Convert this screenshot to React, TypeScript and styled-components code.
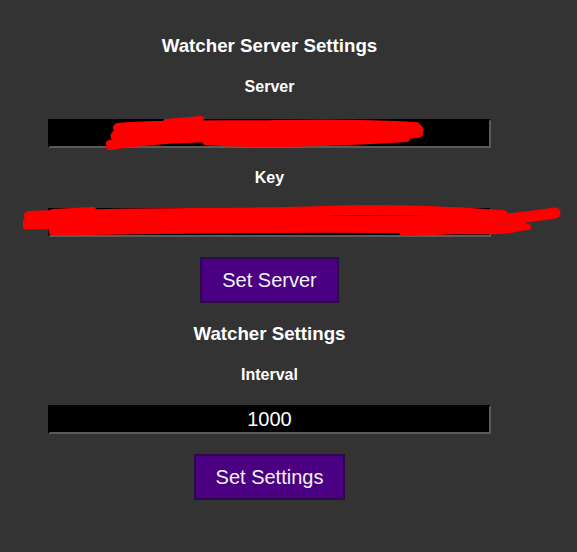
import React from 'react';
import styled, { createGlobalStyle } from 'styled-components';

const GlobalStyle = createGlobalStyle`
  html, body {
    margin: 0;
    padding: 0;
    background-color: #333333;
  }
  body {
    font-family: 'Liberation Sans', Arial, sans-serif;
    color: #ffffff;
  }
`;

const Page = styled.div`
  width: 577px;
  min-height: 552px;
  background-color: #333333;
  padding: 35px 0 0 48px;
  box-sizing: border-box;
`;

const Panel = styled.div`
  width: 443px;
  display: flex;
  flex-direction: column;
  align-items: center;
`;

const Heading = styled.h3<{ $top?: number }>`
  margin: ${(p) => p.$top ?? 0}px 0 0;
  font-size: 18.72px;
  line-height: 22px;
  font-weight: bold;
  color: #ffffff;
`;

const Label = styled.h4<{ $top: number }>`
  margin: ${(p) => p.$top}px 0 0;
  font-size: 16px;
  line-height: 18px;
  font-weight: bold;
  color: #ffffff;
`;

const Field = styled.div<{ $top: number }>`
  position: relative;
  width: 100%;
  margin-top: ${(p) => p.$top}px;
`;

const Input = styled.input`
  display: block;
  width: 100%;
  height: 29px;
  box-sizing: border-box;
  background-color: #000000;
  color: #ffffff;
  border-style: solid;
  border-width: 2px;
  border-color: #000000 #5a5a5a #5a5a5a #000000;
  font-family: 'Liberation Sans', Arial, sans-serif;
  font-size: 20px;
  text-align: center;
  padding: 0;
  outline: none;
`;

// red marker strokes that hide the server address and key
const Scribble = styled.svg`
  position: absolute;
  pointer-events: none;
`;

const Button = styled.button<{ $top: number }>`
  margin-top: ${(p) => p.$top}px;
  height: 46px;
  padding: 0 20px;
  background-color: #4b0082;
  border: 2px solid #2c0a45;
  color: #f2f2f2;
  font-family: 'Liberation Sans', Arial, sans-serif;
  font-size: 20px;
  cursor: pointer;
`;

const App: React.FC = () => {
  return (
    <>
      <GlobalStyle />
      <Page>
        <Panel>
          <Heading>Watcher Server Settings</Heading>
          <Label $top={21}>Server</Label>
          <Field $top={23}>
            <Input type="text" defaultValue="" />
            <Scribble
              width="320"
              height="36"
              viewBox="0 0 320 36"
              style={{ left: 58, top: -3 }}
            >
              <g fill="none" stroke="#ff0000" strokeLinecap="round" strokeLinejoin="round">
                <path d="M12 12 C60 8 120 10 170 9 S260 8 310 11" strokeWidth="10" />
                <path d="M4 29 C50 22 110 20 160 21 S250 20 312 17" strokeWidth="10" />
                <path d="M10 20 C80 14 150 16 220 14 S290 13 312 14" strokeWidth="11" />
                <path d="M60 6 L95 3 M70 8 L40 26" strokeWidth="6" />
                <path d="M100 25 C150 29 220 27 300 22" strokeWidth="8" />
              </g>
            </Scribble>
          </Field>
          <Label $top={21}>Key</Label>
          <Field $top={21}>
            <Input type="text" defaultValue="" />
            <Scribble
              width="540"
              height="34"
              viewBox="0 0 540 34"
              style={{ left: -25, top: -3 }}
            >
              <g fill="none" stroke="#ff0000" strokeLinecap="round" strokeLinejoin="round">
                <path d="M6 11 C100 7 220 9 300 6 S440 8 480 10" strokeWidth="10" />
                <path d="M4 19 C120 17 250 16 360 16 S470 17 532 8" strokeWidth="11" />
                <path d="M30 26 C150 24 300 22 400 24 S480 24 500 21" strokeWidth="9" />
                <path d="M380 28 C420 27 460 25 505 22" strokeWidth="6" />
                <path d="M30 7 L70 5" strokeWidth="6" />
              </g>
            </Scribble>
          </Field>
          <Button $top={20}>Set Server</Button>
          <Heading $top={20}>Watcher Settings</Heading>
          <Label $top={21}>Interval</Label>
          <Field $top={21}>
            <Input type="text" defaultValue="1000" />
          </Field>
          <Button $top={20}>Set Settings</Button>
        </Panel>
      </Page>
    </>
  );
};

export default App;
